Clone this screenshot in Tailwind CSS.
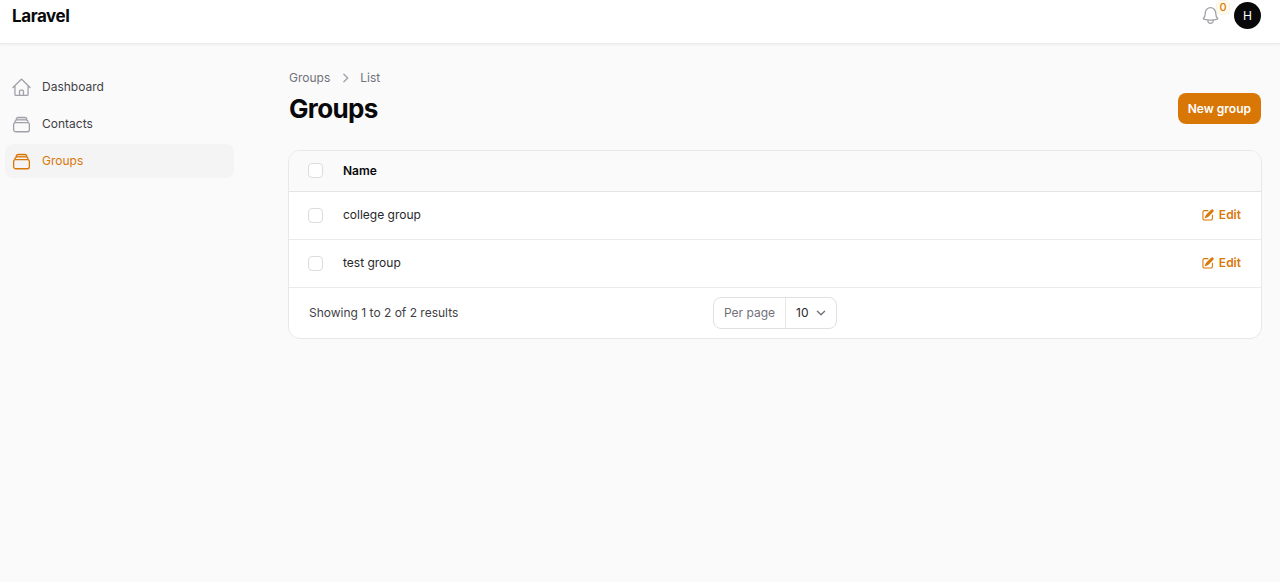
<!DOCTYPE html>
<html lang="en">
<head>
<meta charset="utf-8">
<meta name="viewport" content="width=device-width, initial-scale=1">
<title>Groups - Laravel</title>
<script src="https://cdn.jsdelivr.net/npm/@tailwindcss/browser@4"></script>
</head>
<body class="min-h-screen bg-[#fafafa] font-['Inter',sans-serif] text-xs leading-5 text-[#27272a] antialiased">
<svg class="hidden" aria-hidden="true">
  <symbol id="stack" viewBox="0 0 24 24"><path fill="currentColor" fill-opacity=".35" stroke="none" d="M6 6.75V6a2.25 2.25 0 0 1 2.25-2.25h7.5A2.25 2.25 0 0 1 18 6v.75Z"/><path stroke-linecap="round" stroke-linejoin="round" d="M6 6.878V6a2.25 2.25 0 0 1 2.25-2.25h7.5A2.25 2.25 0 0 1 18 6v.878m-12 0c.235-.083.487-.128.75-.128h10.5c.263 0 .515.045.75.128m-12 0A2.25 2.25 0 0 0 4.5 9v.878m13.5-3A2.25 2.25 0 0 1 19.5 9v.878m0 0a2.246 2.246 0 0 0-.75-.128H5.25c-.263 0-.515.045-.75.128m15 0A2.25 2.25 0 0 1 21 12v6a2.25 2.25 0 0 1-2.25 2.25H5.25A2.25 2.25 0 0 1 3 18v-6c0-.98.626-1.813 1.5-2.122"/></symbol>
  <symbol id="pencil" viewBox="0 0 20 20"><path d="m5.433 13.917 1.262-3.155A4 4 0 0 1 7.58 9.42l6.92-6.918a2.121 2.121 0 0 1 3 3l-6.92 6.918c-.383.383-.84.685-1.343.886l-3.154 1.262a.5.5 0 0 1-.65-.65Z"/><path d="M3.5 5.75c0-.69.56-1.25 1.25-1.25H10A.75.75 0 0 0 10 3H4.75A2.75 2.75 0 0 0 2 5.75v9.5A2.75 2.75 0 0 0 4.75 18h9.5A2.75 2.75 0 0 0 17 15.25V10a.75.75 0 0 0-1.5 0v5.25c0 .69-.56 1.25-1.25 1.25h-9.5c-.69 0-1.25-.56-1.25-1.25v-9.5Z"/></symbol>
</svg>

<header class="flex items-start justify-between border-b border-[#ebebec] bg-white pr-[19px] pb-3 pl-3 shadow-xs">
  <a href="#" class="flex h-[31px] items-center text-[17px] font-bold tracking-tight text-[#09090b]">Laravel</a>
  <div class="flex h-[31px] items-center gap-[13px]">
    <button type="button" aria-label="Notifications" class="relative text-[#a1a1aa]">
      <svg class="size-[21px]" viewBox="0 0 24 24" fill="none" stroke="currentColor" stroke-width="1.5"><path stroke-linecap="round" stroke-linejoin="round" d="M14.857 17.082a23.848 23.848 0 0 0 5.454-1.31A8.967 8.967 0 0 1 18 9.75V9A6 6 0 0 0 6 9v.75a8.967 8.967 0 0 1-2.312 6.022c1.733.64 3.56 1.085 5.455 1.31m5.714 0a24.255 24.255 0 0 1-5.714 0m5.714 0a3 3 0 1 1-5.714 0"/></svg>
      <span class="absolute -top-1 -right-2 flex h-[13px] w-3 items-center justify-center rounded bg-[#fffbeb] text-[11px] leading-none font-medium text-[#d97706] ring-1 ring-[#d97706]/10">0</span>
    </button>
    <button type="button" aria-label="User menu" class="flex size-[27px] items-center justify-center rounded-full bg-[#09090b] text-xs text-white">H</button>
  </div>
</header>

<div class="flex">
  <nav class="w-[239px] shrink-0 px-[5px] pt-[26px]" aria-label="Main">
    <ul class="flex flex-col gap-[3px] text-[#3f3f46]">
      <li><a href="#" class="flex h-[34px] items-center gap-2.5 rounded-lg px-1.5"><svg class="size-[21px] text-[#a1a1aa]" viewBox="0 0 24 24" fill="none" stroke="currentColor" stroke-width="1.5"><path stroke-linecap="round" stroke-linejoin="round" d="m2.25 12 8.954-8.955c.44-.439 1.152-.439 1.591 0L21.75 12M4.5 9.75v10.125c0 .621.504 1.125 1.125 1.125H9.75v-4.875c0-.621.504-1.125 1.125-1.125h2.25c.621 0 1.125.504 1.125 1.125V21h4.125c.621 0 1.125-.504 1.125-1.125V9.75M8.25 21h8.25"/></svg>Dashboard</a></li>
      <li><a href="#" class="flex h-[34px] items-center gap-2.5 rounded-lg px-1.5"><svg class="size-[21px] text-[#a1a1aa]" fill="none" stroke="currentColor" stroke-width="1.5"><use href="#stack"/></svg>Contacts</a></li>
      <li><a href="#" aria-current="page" class="flex h-[34px] items-center gap-2.5 rounded-lg bg-[#f4f4f5] px-1.5 text-[#d97706]"><svg class="size-[21px]" fill="none" stroke="currentColor" stroke-width="1.5"><use href="#stack"/></svg>Groups</a></li>
    </ul>
  </nav>

  <main class="min-w-0 flex-1 pt-6 pr-[18px] pl-[49px]">
    <div class="flex items-end justify-between px-px">
      <div>
        <nav aria-label="Breadcrumb" class="flex items-center gap-1.5 text-[#71717a]">
          <a href="#">Groups</a>
          <svg class="size-[18px] text-[#a1a1aa]" viewBox="0 0 20 20" fill="currentColor"><path fill-rule="evenodd" clip-rule="evenodd" d="M8.22 5.22a.75.75 0 0 1 1.06 0l4.25 4.25a.75.75 0 0 1 0 1.06l-4.25 4.25a.75.75 0 0 1-1.06-1.06L11.94 10 8.22 6.28a.75.75 0 0 1 0-1.06Z"/></svg>
          <a href="#">List</a>
        </nav>
        <h1 class="mt-[3px] text-[26px] leading-9 font-bold tracking-tight text-[#09090b]">Groups</h1>
      </div>
      <button type="button" class="mb-[3px] h-[31px] rounded-lg bg-[#d97706] px-2.5 font-semibold text-white">New group</button>
    </div>

    <section class="mt-[23px] overflow-hidden rounded-xl border border-[#e8e8e9] bg-white">
      <table class="w-full text-left">
        <thead class="bg-[#fafafa]">
          <tr class="h-10 border-b border-[#e4e4e7]">
            <th class="w-[54px] pl-[19px]"><input type="checkbox" aria-label="Select all" class="block size-[15px] appearance-none rounded border border-[#dcdcdf] bg-white"></th>
            <th class="font-semibold text-[#09090b]">Name</th>
            <th aria-label="Actions"></th>
          </tr>
        </thead>
        <tbody>
          <tr class="h-12 border-b border-[#ebebed]">
            <td class="pl-[19px]"><input type="checkbox" aria-label="Select college group" class="block size-[15px] appearance-none rounded border border-[#dcdcdf] bg-white"></td>
            <td>college group</td>
            <td class="pr-5"><a href="#" class="flex items-center justify-end gap-1 font-semibold text-[#d97706]"><svg class="size-3.5" fill="currentColor"><use href="#pencil"/></svg>Edit</a></td>
          </tr>
          <tr class="h-12 border-b border-[#ebebed]">
            <td class="pl-[19px]"><input type="checkbox" aria-label="Select test group" class="block size-[15px] appearance-none rounded border border-[#dcdcdf] bg-white"></td>
            <td>test group</td>
            <td class="pr-5"><a href="#" class="flex items-center justify-end gap-1 font-semibold text-[#d97706]"><svg class="size-3.5" fill="currentColor"><use href="#pencil"/></svg>Edit</a></td>
          </tr>
        </tbody>
      </table>
      <div class="grid grid-cols-[1fr_auto_1fr] items-center px-5 py-[9px]">
        <p class="text-[#3f3f46]">Showing 1 to 2 of 2 results</p>
        <div class="flex h-8 items-stretch rounded-lg border border-[#e0e0e3]">
          <label for="per-page" class="flex items-center border-r border-[#e8e8ea] px-2.5 text-[#71717a]">Per page</label>
          <div class="relative flex items-center">
            <select id="per-page" class="h-full w-[50px] appearance-none bg-transparent pl-2.5 outline-none"><option>10</option><option>25</option><option>50</option></select>
            <svg class="pointer-events-none absolute right-1.5 size-[18px] text-[#71717a]" viewBox="0 0 20 20" fill="none" stroke="currentColor" stroke-width="1.5"><path stroke-linecap="round" stroke-linejoin="round" d="m6 8 4 4 4-4"/></svg>
          </div>
        </div>
      </div>
    </section>
  </main>
</div>
</body>
</html>
